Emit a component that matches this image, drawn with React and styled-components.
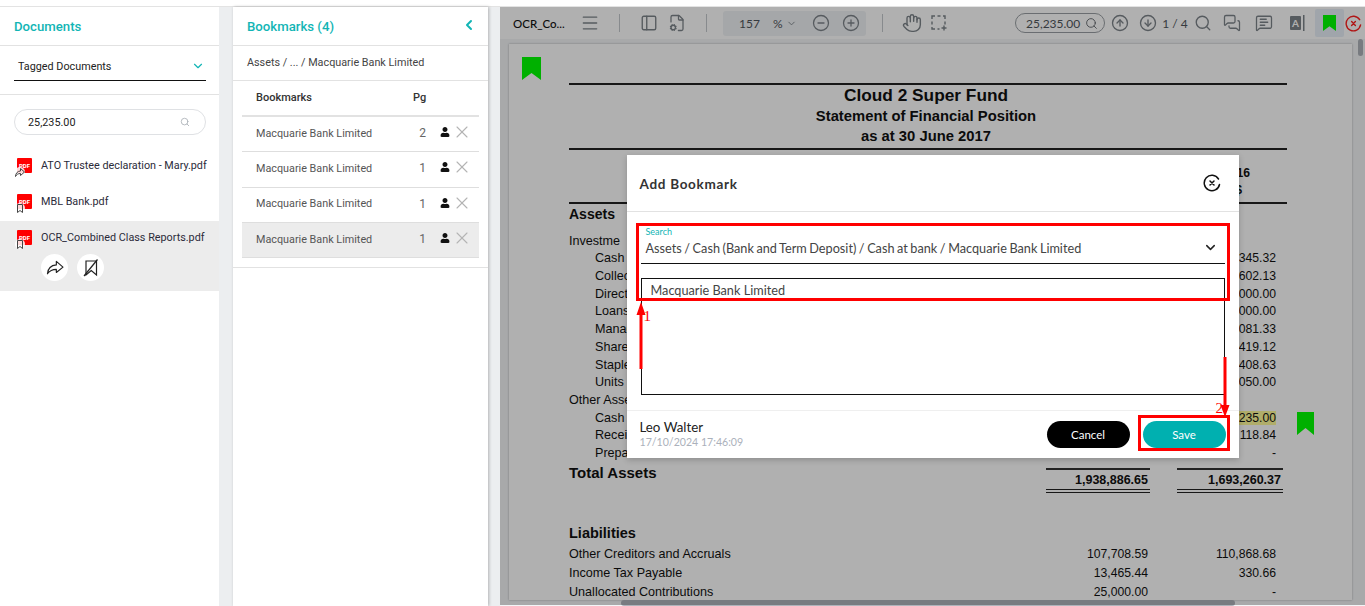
import React from 'react';
import styled, { createGlobalStyle } from 'styled-components';
import {
  ChevronDown,
  ChevronLeft,
  CircleArrowDown,
  CircleArrowUp,
  CircleMinus,
  CirclePlus,
  FileCog,
  Hand,
  Menu,
  MessageSquareText,
  MessagesSquare,
  PanelLeft,
  Search,
  X,
} from 'lucide-react';
import { FaUser } from 'react-icons/fa';

const teal = '#12b5b5';
const toolGrey = '#7d848a';

const GlobalStyle = createGlobalStyle`
  html, body {
    margin: 0;
    height: 100%;
    overflow: hidden;
    background: #fff;
    font-family: Roboto, sans-serif;
  }
  * {
    box-sizing: border-box;
  }
`;

const Layout = styled.div`
  display: flex;
  height: 600px;
  margin-top: 6px;
  border-top: 1px solid #e3e3e3;
  background: #eceef0;
`;

const Panel = styled.aside`
  width: ${({ $w }) => $w}px;
  margin-right: ${({ $mr }) => $mr}px;
  background: #fff;
  flex-shrink: 0;
`;

const BookmarkPanel = styled(Panel)`
  box-shadow: 1px 0 3px rgba(0, 0, 0, 0.25);
`;

const PanelHead = styled.div`
  display: flex;
  align-items: center;
  justify-content: space-between;
  height: 39px;
  padding: 0 11px 0 14px;
  border-bottom: 1px solid #e2e2e2;
  color: ${teal};
  font-size: 13.2px;
  font-weight: 500;

  svg {
    margin-top: -3px;
  }
`;

const SelectWrap = styled.div`
  height: 49px;
  padding: 8px 13px 0 14px;
  border-bottom: 1px solid #e2e2e2;
`;

const SelectBox = styled.div`
  display: flex;
  align-items: center;
  justify-content: space-between;
  height: 27px;
  padding: 0 1px 2px 4px;
  border-bottom: 1px solid #111;
  color: #222;
  font-size: 10.8px;
`;

const SearchBox = styled.div`
  display: flex;
  align-items: center;
  justify-content: space-between;
  width: 192px;
  height: 26px;
  margin: 14px 0 17px 14px;
  padding: 0 15px 0 13px;
  border: 1px solid #dfe1e4;
  border-radius: 13px;
  color: #222;
  font-size: 10.8px;
`;

const FileRow = styled.div`
  padding: ${({ $active }) => ($active ? '9px 0 0 17px' : '6px 0 0 17px')};
  height: ${({ $active }) => ($active ? '70px' : '36px')};
  margin-top: ${({ $active }) => ($active ? '-3px' : '0')};
  background: ${({ $active }) => ($active ? '#ececec' : 'transparent')};
`;

const FileLine = styled.div`
  display: flex;
  align-items: flex-start;
  gap: 9px;
  height: 20px;
  color: #2b2b3a;
  font-size: 10.8px;
  line-height: 15px;
  white-space: nowrap;
`;

const PdfIcon = styled.span`
  position: relative;
  display: flex;
  align-items: center;
  justify-content: center;
  width: 15px;
  height: 15px;
  border-radius: 1px;
  background: #f00;
  color: #fff;
  font-size: 6px;
  font-weight: 700;
  flex-shrink: 0;
`;

const PdfBadge = styled.span`
  position: absolute;
  left: -2px;
  bottom: -4px;
  display: flex;
  width: 10px;
  height: 10px;
  align-items: center;
  justify-content: center;
  border-radius: 50%;
  background: rgba(255, 255, 255, 0.85);
`;

const FileActions = styled.div`
  display: flex;
  gap: 9px;
  margin: 4px 0 0 24px;
`;

const RoundButton = styled.span`
  display: flex;
  align-items: center;
  justify-content: center;
  width: 27px;
  height: 27px;
  border-radius: 50%;
  background: #fff;
`;

const Crumb = styled.div`
  display: flex;
  align-items: center;
  height: 35px;
  padding: 0 0 2px 14px;
  border-bottom: 1px solid #e2e2e2;
  color: #444;
  font-size: 10.8px;
`;

const BookmarkTable = styled.div`
  margin: 0 9px;
  padding-bottom: 9px;
`;

const TableOuter = styled.div`
  border-bottom: 1px solid #e2e2e2;
`;

const TableHead = styled.div`
  display: grid;
  grid-template-columns: 157px 40px;
  align-items: center;
  height: 36px;
  padding: 0 0 2px 14px;
  border-bottom: 2px solid #e2e2e2;
  color: #333;
  font-size: 11px;
  font-weight: 500;
`;

const TableRow = styled.div`
  display: grid;
  grid-template-columns: 150px 20px 24px 19px;
  align-items: center;
  height: 35.3px;
  padding: 0 0 2px 14px;
  border-bottom: 1px solid #dedede;
  background: ${({ $active }) => ($active ? '#ececec' : 'transparent')};
  color: #555;
  font-size: 10.8px;
`;

const PageNum = styled.span`
  text-align: right;
  font-size: 12px;
  color: #666;
`;

const PersonCell = styled.span`
  display: flex;
  justify-content: flex-end;
  margin-top: -2px;
  color: #111;
`;

const RemoveCell = styled.span`
  display: flex;
  justify-content: flex-end;
  height: 14px;
  align-items: center;
  margin: -2px -3px 0 0;
  color: #b4b4b4;
`;

const Viewer = styled.main`
  position: relative;
  flex: 1;
  min-width: 0;
  overflow: hidden;
  background: #f3f5f7;
  font-family: Lato, sans-serif;
`;

const Toolbar = styled.div`
  display: flex;
  align-items: center;
  height: 32px;
  background: #fff;
  color: ${toolGrey};
`;

const Slot = styled.span`
  display: flex;
  align-items: center;
  justify-content: center;
  flex-shrink: 0;
  margin-left: ${({ $ml }) => $ml || 0}px;
`;

const DocName = styled(Slot)`
  justify-content: flex-start;
  width: 60px;
  color: #111;
  font-size: 11.5px;
  font-weight: 500;
`;

const Divider = styled(Slot)`
  width: 1px;
  height: 18px;
  background: #c4c8cc;
`;

const ZoomGroup = styled(Slot)`
  justify-content: flex-start;
  width: 143px;
  height: 25px;
  border-radius: 3px;
  background: #f0f2f5;
  color: #50565c;
  font-size: 12px;
`;

const FindBox = styled(Slot)`
  justify-content: space-between;
  width: 90px;
  height: 20px;
  padding: 0 6px 0 10px;
  border: 1px solid #9a9fa4;
  border-radius: 10px;
  color: #50565c;
  font-size: 12px;
`;

const PageCount = styled(Slot)`
  width: 22px;
  color: #50565c;
  font-size: 12px;
  white-space: nowrap;
`;

const ActiveTool = styled(Slot)`
  width: 29px;
  height: 28px;
  border-radius: 2px;
  background: #e8f0f8;
`;

const DocArea = styled.div`
  padding: 5px 0 0 9px;
`;

const DocPage = styled.article`
  position: relative;
  width: 843px;
  height: 556px;
  padding: 39px 65px 0 60px;
  background: #fff;
  box-shadow: 0 0 2px rgba(0, 0, 0, 0.3);
  color: #111;
  font-family: 'Liberation Sans', Arial, sans-serif;
`;

const PagePin = styled.span`
  position: absolute;
  left: ${({ $x }) => $x}px;
  top: ${({ $y }) => $y}px;
  display: flex;
`;

const Rule = styled.div`
  height: 2px;
  margin-top: ${({ $mt }) => $mt || 0}px;
  background: #222;
`;

const Title = styled.div`
  height: 20px;
  margin-top: ${({ $mt }) => $mt || 0}px;
  padding-right: 4px;
  text-align: center;
  font-size: ${({ $size }) => $size}px;
  font-weight: 700;
  line-height: 20px;
`;

const Columns = styled.div`
  display: grid;
  grid-template-columns: 1fr 104px 27px 106px 4px;
`;

const DocRow = styled(Columns)`
  height: ${({ $h }) => $h || 17.72}px;
  margin-top: ${({ $mt }) => $mt || 0}px;
  font-size: 12.6px;
  font-weight: ${({ $bold }) => ($bold ? 700 : 400)};
  line-height: ${({ $h }) => $h || 17.72}px;
`;

const RowLabel = styled.span`
  padding-left: ${({ $indent }) => ($indent ? 26 : 0)}px;
`;

const Amount = styled.span`
  grid-column: ${({ $col }) => $col};
  padding-right: ${({ $col, $pad }) => $pad || ($col === 2 ? 2 : 7)}px;
  font-size: 12.2px;
  text-align: right;
`;

const Marked = styled.mark`
  background: #fffb9a;
  color: inherit;
`;

const SectionHead = styled.div`
  height: 20px;
  margin: ${({ $mt }) => $mt || 0}px 0 ${({ $mb }) => $mb || 0}px;
  font-size: ${({ $size }) => $size || 14}px;
  font-weight: 700;
  line-height: 20px;
`;

const TotalRow = styled(Columns)`
  margin-top: 5px;
  font-weight: 700;
`;

const TotalLabel = styled.span`
  margin-top: -4px;
  font-size: 15px;
`;

const TotalCell = styled.span`
  grid-column: ${({ $col }) => $col};
  height: 25px;
  padding: 2px 2px 0 0;
  border-top: 2px solid #333;
  border-bottom: 4px double #222;
  font-size: 12.5px;
  line-height: 17px;
  text-align: right;
`;

const HScroll = styled.div`
  position: absolute;
  left: 121px;
  bottom: 0;
  width: 614px;
  height: 6px;
  border-radius: 3px;
  background: #aeb3ba;
`;

const VScroll = styled.div`
  position: absolute;
  right: 2px;
  top: 32px;
  width: 5px;
  height: 17px;
  border-radius: 3px;
  background: #aeb3ba;
`;

const Dimmer = styled.div`
  position: absolute;
  inset: 0 0 1px;
  display: flex;
  align-items: center;
  justify-content: center;
  background: rgba(0, 0, 0, 0.31);
`;

const Modal = styled.section`
  position: relative;
  display: flex;
  flex-direction: column;
  width: 612px;
  height: 303px;
  background: #fff;
  box-shadow: 0 2px 6px rgba(0, 0, 0, 0.2);
`;

const ModalHead = styled.header`
  display: flex;
  align-items: center;
  justify-content: space-between;
  height: 57px;
  padding: 2px 18px 0 13px;
  border-bottom: 1px solid #e2e2e2;
  color: #333;
  font-size: 13.5px;
  font-weight: 700;
  letter-spacing: 0.7px;

  svg {
    margin-top: -2px;
  }
`;

const ModalBody = styled.div`
  flex: 1;
  padding: 14px 14px 0;
`;

const FieldLabel = styled.div`
  padding-left: 5px;
  color: ${teal};
  font-size: 9px;
  line-height: 12px;
`;

const FieldValue = styled.div`
  display: flex;
  align-items: center;
  justify-content: space-between;
  height: 26px;
  padding: 0 7px 5px 5px;
  border-bottom: 1px solid #111;
  color: #444;
  font-size: 12.7px;
  word-spacing: -0.7px;
`;

const NoteBox = styled.div`
  height: 117px;
  margin-top: 14px;
  padding: 3px 9px;
  border: 1px solid #111;
  color: #444;
  font-size: 12.7px;
`;

const ModalFoot = styled.footer`
  display: flex;
  align-items: center;
  justify-content: space-between;
  height: 48px;
  padding: 0 13px;
  border-top: 1px solid #efefef;
`;

const Author = styled.div`
  color: #222;
  font-size: 13.3px;
  line-height: 16px;
`;

const Stamp = styled.div`
  color: #abb1bb;
  font-size: 10.6px;
  line-height: 15px;
`;

const Actions = styled.div`
  display: flex;
  gap: 13px;
`;

const PillButton = styled.button`
  width: 83px;
  height: 27px;
  padding: 0;
  border: 0;
  border-radius: 14px;
  background: ${({ $primary }) => ($primary ? '#00b0b0' : '#000')};
  color: #fff;
  font-family: Lato, sans-serif;
  font-size: 11.5px;
`;

const RedBox = styled.div`
  position: absolute;
  left: ${({ $x }) => $x}px;
  top: ${({ $y }) => $y}px;
  width: ${({ $w }) => $w}px;
  height: ${({ $h }) => $h}px;
  border: 3px solid #f00;
  pointer-events: none;
`;

const RedArrow = styled.svg`
  position: absolute;
  left: ${({ $x }) => $x}px;
  top: ${({ $y }) => $y}px;
`;

const RedNumber = styled.span`
  position: absolute;
  left: ${({ $x }) => $x}px;
  top: ${({ $y }) => $y}px;
  color: #f00;
  font-family: 'Liberation Serif', serif;
  font-size: 15px;
  line-height: 16px;
`;

const GreenMark = ({ size = 19, height = 23 }) => (
  <svg width={size} height={height} viewBox="0 0 19 23" preserveAspectRatio="none">
    <path d="M0 0h19v23l-9.5-7L0 23z" fill="#00ff00" />
  </svg>
);

const MiniBookmark = () => (
  <svg width="8" height="9" viewBox="0 0 8 9" fill="none" stroke="#444" strokeWidth="1">
    <path d="M1.500.5h5v8L4 6.500 1.500 8.500z" />
  </svg>
);

const MiniShare = () => (
  <svg width="10" height="9" viewBox="0 0 20 18" fill="none" stroke="#444" strokeWidth="2">
    <path d="M11 1l8 7-8 7v-4C6 11 3 13 1 17c0-6 4-11 10-11z" />
  </svg>
);

const ShareIcon = () => (
  <svg width="18" height="16" viewBox="0 0 20 18" fill="none" stroke="#222" strokeWidth="1.3" strokeLinejoin="round">
    <path d="M11.500 1.500l7.500 6.500-7.500 6v-3.500c-4.500 0-7.500 1.500-10 5 .5-5.500 4-9.500 10-10z" />
  </svg>
);

const NoBookmarkIcon = () => (
  <svg width="16" height="18" viewBox="0 0 16 18" fill="none" stroke="#222" strokeWidth="1.200">
    <path d="M3 2h10.500v14L8.250 11.500 3 16z" />
    <path d="M14.500.5L1 17" />
  </svg>
);

const RingClose = ({ size = 18, color = '#111', weight = 1.5 }) => (
  <svg width={size} height={size} viewBox="0 0 18 18" fill="none" stroke={color} strokeWidth={weight} strokeLinecap="round">
    <path d="M16.500 10.500A7.700 7.700 0 1 1 15.500 5" />
    <path d="M7 7l4 4M11 7l-4 4" />
  </svg>
);

const DashedSelect = () => (
  <svg width="16" height="16" viewBox="0 0 16 16" fill="none" stroke="currentColor" strokeWidth="1.4">
    <path d="M1 4V1h3M6.500 1h3M12 1h2v3M1 6.500v3M1 12v2h3M6.500 14h2M14 6.500v3M13 10.500v5M10.500 13h5" />
  </svg>
);

const TextTool = () => (
  <svg width="15" height="16" viewBox="0 0 15 16">
    <rect x="0" y="1" width="11" height="14" rx="1" fill={toolGrey} />
    <text x="5.500" y="12" fontSize="10" fontWeight="700" fontFamily="Lato, sans-serif" textAnchor="middle" fill="#fff">A</text>
    <rect x="13" y="0" width="1.500" height="16" fill={toolGrey} />
  </svg>
);

const documents = [
  { name: 'ATO Trustee declaration - Mary.pdf', badge: <MiniShare /> },
  { name: 'MBL Bank.pdf', badge: <MiniBookmark /> },
];

const bookmarks = [{ pg: 2 }, { pg: 1 }, { pg: 1 }, { pg: 1, active: true }];

// the modal covers the middle of these rows, so only what shows beside it is listed
const assetRows = [
  { label: 'Investme' },
  { label: 'Cash', indent: true, b: '345.32' },
  { label: 'Collec', indent: true, b: '602.13' },
  { label: 'Direct', indent: true, b: '000.00' },
  { label: 'Loans', indent: true, b: '000.00' },
  { label: 'Manag', indent: true, b: '081.33' },
  { label: 'Share', indent: true, b: '419.12' },
  { label: 'Staple', indent: true, b: '408.63' },
  { label: 'Units', indent: true, b: '050.00' },
  { label: 'Other Asse' },
  { label: 'Cash', indent: true, b: '235.00', marked: true },
  { label: 'Recei', indent: true, b: '118.84' },
  { label: 'Prepa', indent: true, b: '-' },
];

const liabilityRows = [
  { label: 'Other Creditors and Accruals', a: '107,708.59', b: '110,868.68' },
  { label: 'Income Tax Payable', a: '13,465.44', b: '330.66' },
  { label: 'Unallocated Contributions', a: '25,000.00', b: '-' },
];

const App = () => (
  <>
    <GlobalStyle />
    <Layout>
      <Panel $w={219} $mr={14}>
        <PanelHead>Documents</PanelHead>
        <SelectWrap>
          <SelectBox>
            Tagged Documents
            <ChevronDown size={14} color={teal} />
          </SelectBox>
        </SelectWrap>
        <SearchBox>
          25,235.00
          <Search size={10} color="#aab0b6" />
        </SearchBox>
        {documents.map((doc) => (
          <FileRow key={doc.name}>
            <FileLine>
              <PdfIcon>
                PDF
                <PdfBadge>{doc.badge}</PdfBadge>
              </PdfIcon>
              {doc.name}
            </FileLine>
          </FileRow>
        ))}
        <FileRow $active>
          <FileLine>
            <PdfIcon>
              PDF
              <PdfBadge>
                <MiniBookmark />
              </PdfBadge>
            </PdfIcon>
            OCR_Combined Class Reports.pdf
          </FileLine>
          <FileActions>
            <RoundButton>
              <ShareIcon />
            </RoundButton>
            <RoundButton>
              <NoBookmarkIcon />
            </RoundButton>
          </FileActions>
        </FileRow>
      </Panel>

      <BookmarkPanel $w={255} $mr={12}>
        <PanelHead>
          Bookmarks (4)
          <ChevronLeft size={16} strokeWidth={3} color={teal} />
        </PanelHead>
        <Crumb>Assets / ... / Macquarie Bank Limited</Crumb>
        <TableOuter>
          <BookmarkTable>
            <TableHead>
              <span>Bookmarks</span>
              <span>Pg</span>
            </TableHead>
            {bookmarks.map((item, i) => (
              <TableRow key={i} $active={item.active}>
                <span>Macquarie Bank Limited</span>
                <PageNum>{item.pg}</PageNum>
                <PersonCell>
                  <FaUser size={10} />
                </PersonCell>
                <RemoveCell>
                  <X size={20} strokeWidth={1.3} />
                </RemoveCell>
              </TableRow>
            ))}
          </BookmarkTable>
        </TableOuter>
      </BookmarkPanel>

      <Viewer>
        <Toolbar>
          <DocName $ml={13}>OCR_Co...</DocName>
          <Slot $ml={7}>
            <Menu size={20} strokeWidth={1.6} />
          </Slot>
          <Divider $ml={19} />
          <Slot $ml={20}>
            <PanelLeft size={18} strokeWidth={1.8} />
          </Slot>
          <Slot $ml={10}>
            <FileCog size={18} strokeWidth={1.7} />
          </Slot>
          <Divider $ml={20} />
          <ZoomGroup $ml={16}>
            <Slot $ml={16}>157</Slot>
            <Slot $ml={13}>%</Slot>
            <Slot $ml={3}>
              <ChevronDown size={11} color={toolGrey} />
            </Slot>
            <Slot $ml={15}>
              <CircleMinus size={18} strokeWidth={1.7} color={toolGrey} />
            </Slot>
            <Slot $ml={12}>
              <CirclePlus size={18} strokeWidth={1.7} color={toolGrey} />
            </Slot>
          </ZoomGroup>
          <Divider $ml={16} />
          <Slot $ml={19}>
            <Hand size={20} strokeWidth={1.7} />
          </Slot>
          <Slot $ml={9}>
            <DashedSelect />
          </Slot>
          <FindBox $ml={68}>
            25,235.00
            <Search size={13} strokeWidth={1.5} />
          </FindBox>
          <Slot $ml={6}>
            <CircleArrowUp size={18} strokeWidth={1.8} />
          </Slot>
          <Slot $ml={10}>
            <CircleArrowDown size={18} strokeWidth={1.8} />
          </Slot>
          <PageCount $ml={7}>1 / 4</PageCount>
          <Slot $ml={8}>
            <Search size={18} strokeWidth={1.8} />
          </Slot>
          <Slot $ml={11}>
            <MessagesSquare size={18} strokeWidth={1.7} />
          </Slot>
          <Slot $ml={14}>
            <MessageSquareText size={18} strokeWidth={1.7} />
          </Slot>
          <Slot $ml={17}>
            <TextTool />
          </Slot>
          <ActiveTool $ml={10}>
            <GreenMark size={13} height={16} />
          </ActiveTool>
          <Slot $ml={1}>
            <RingClose size={17} color="#ff2020" />
          </Slot>
        </Toolbar>

        <DocArea>
          <DocPage>
            <PagePin $x={13} $y={13}>
              <GreenMark />
            </PagePin>
            <PagePin $x={788} $y={368}>
              <GreenMark size={17} height={23} />
            </PagePin>
            <Rule />
            <Title $size={17.3}>Cloud 2 Super Fund</Title>
            <Title $size={14.8} $mt={1}>Statement of Financial Position</Title>
            <Title $size={14.8}>as at 30 June 2017</Title>
            <Rule $mt={2} />
            <DocRow $bold $mt={15} $h={17}>
              <span />
              <Amount $col={4} $pad={33}>16</Amount>
            </DocRow>
            <DocRow $bold $h={17}>
              <span />
              <Amount $col={4} $pad={41}>$</Amount>
            </DocRow>
            <Rule $mt={3} />
            <SectionHead $mb={8.500}>Assets</SectionHead>
            {assetRows.map((row, i) => (
              <DocRow key={i}>
                <RowLabel $indent={row.indent}>{row.label}</RowLabel>
                {row.b && <Amount $col={4}>{row.marked ? <Marked>{row.b}</Marked> : row.b}</Amount>}
              </DocRow>
            ))}
            <TotalRow>
              <TotalLabel>Total Assets</TotalLabel>
              <TotalCell $col={2}>1,938,886.65</TotalCell>
              <TotalCell $col={4}>1,693,260.37</TotalCell>
            </TotalRow>
            <SectionHead $mt={30} $mb={2} $size={14.5}>Liabilities</SectionHead>
            {liabilityRows.map((row) => (
              <DocRow key={row.label} $h={19}>
                <span>{row.label}</span>
                <Amount $col={2}>{row.a}</Amount>
                <Amount $col={4}>{row.b}</Amount>
              </DocRow>
            ))}
          </DocPage>
        </DocArea>
        <VScroll />
        <HScroll />

        <Dimmer>
          <Modal>
            <ModalHead>
              Add Bookmark
              <RingClose />
            </ModalHead>
            <ModalBody>
              <FieldLabel>Search</FieldLabel>
              <FieldValue>
                Assets / Cash (Bank and Term Deposit) / Cash at bank / Macquarie Bank Limited
                <ChevronDown size={15} strokeWidth={2.4} color="#222" />
              </FieldValue>
              <NoteBox>Macquarie Bank Limited</NoteBox>
            </ModalBody>
            <ModalFoot>
              <div>
                <Author>Leo Walter</Author>
                <Stamp>17/10/2024 17:46:09</Stamp>
              </div>
              <Actions>
                <PillButton type="button">Cancel</PillButton>
                <PillButton type="button" $primary>Save</PillButton>
              </Actions>
            </ModalFoot>
            <RedBox $x={9} $y={68} $w={594} $h={78} />
            <RedBox $x={511} $y={260} $w={92} $h={36} />
            <RedArrow $x={9} $y={147} width="10" height="67" viewBox="0 0 10 67">
              <path d="M5 0l4.500 13H6.500v54h-3V13H.5z" fill="#f00" />
            </RedArrow>
            <RedArrow $x={593} $y={202} width="10" height="60" viewBox="0 0 10 60">
              <path d="M3.500 0h3v48h3L5 60 .5 48h3z" fill="#f00" />
            </RedArrow>
            <RedNumber $x={17} $y={153}>1</RedNumber>
            <RedNumber $x={589} $y={245}>2</RedNumber>
          </Modal>
        </Dimmer>
      </Viewer>
    </Layout>
  </>
);

export default App;
